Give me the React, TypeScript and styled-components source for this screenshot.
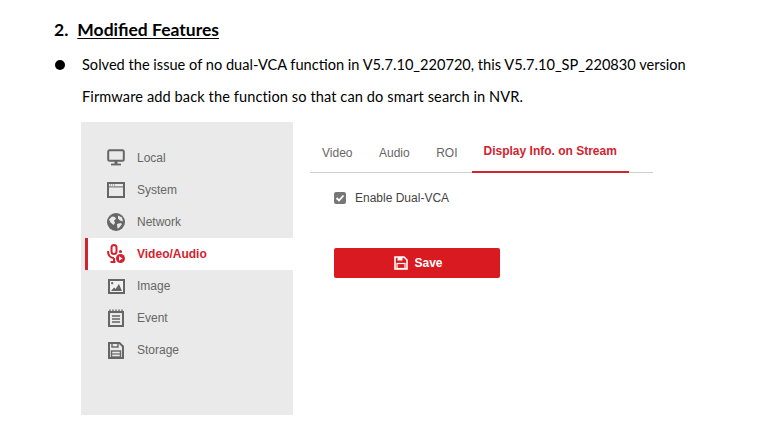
import styled, { createGlobalStyle } from "styled-components";
import type { ReactNode } from "react";

const GlobalStyle = createGlobalStyle`
  html, body {
    margin: 0;
    padding: 0;
    background: #fff;
  }
`;

const grey = "#666";
const red = "#d2232f";

const icons: Record<string, ReactNode> = {
  Local: (
    <svg width="18" height="18" viewBox="0 0 18 18">
      <rect x="1.2" y="1.2" width="15.6" height="10.6" rx="1.5" fill="none" stroke={grey} strokeWidth="2" />
      <rect x="7.5" y="12" width="3" height="3" fill={grey} />
      <rect x="4" y="14.6" width="10" height="1.8" fill={grey} />
    </svg>
  ),
  System: (
    <svg width="18" height="16" viewBox="0 0 18 16">
      <rect x="1" y="1" width="16" height="14" fill="none" stroke={grey} strokeWidth="2" />
      <rect x="1" y="4.4" width="16" height="1" fill={grey} />
      <path d="M3 3h1M5 3h1M7 3h1" stroke={grey} strokeWidth="0.8" />
    </svg>
  ),
  Network: (
    <svg width="18" height="18" viewBox="0 0 18 18">
      <circle cx="9" cy="9" r="9" fill={grey} />
      <path d="M2 6.5l3-3 3 .5 1 2-2 1.5 1 2.5-1.5 2L3.5 9.500zM11 2.500l4 2 1 4-3-1-2-2zM10 11l3.500-1 1.500 1-3 4-1.500 .5z" fill="#eaeaea" />
    </svg>
  ),
  "Video/Audio": (
    <svg width="19" height="20" viewBox="0 0 19 20">
      <rect x="4.5" y="1" width="5" height="9" rx="2.500" fill="none" stroke={red} strokeWidth="2" />
      <path d="M1 7c0 5 3 7 6 7M7 14v3M3.500 18h5" fill="none" stroke={red} strokeWidth="2" />
      <circle cx="13.500" cy="14.500" r="4.500" fill={red} />
      <path d="M12 12.300l3.600 2.200-3.600 2.200z" fill="#fff" />
      <circle cx="13.500" cy="7.500" r="1.600" fill={red} />
    </svg>
  ),
  Image: (
    <svg width="17" height="15" viewBox="0 0 17 15">
      <rect x="1" y="1" width="15" height="13" fill="#f2f2f2" stroke={grey} strokeWidth="2" />
      <path d="M3 12l3-3.500 1.500 1.500 3.500-5 3 7z" fill={grey} />
      <rect x="3.200" y="3.200" width="2" height="2" fill={grey} />
    </svg>
  ),
  Event: (
    <svg width="16" height="18" viewBox="0 0 16 18">
      <rect x="1" y="3" width="14" height="14" fill="none" stroke={grey} strokeWidth="2" />
      <path d="M2 0.500v3M5 0.500v3M8 0.500v3M11 0.500v3M14 0.500v3" stroke={grey} strokeWidth="1.400" />
      <path d="M4 7h8M4 10h8M4 13h8" stroke={grey} strokeWidth="1.300" />
    </svg>
  ),
  Storage: (
    <svg width="16" height="17" viewBox="0 0 16 17">
      <path d="M1 1h10.500L15 4.500V16H1z" fill="none" stroke={grey} strokeWidth="2" />
      <rect x="4" y="1" width="6" height="4" fill="none" stroke={grey} strokeWidth="1.400" />
      <rect x="3.500" y="9" width="9" height="6" fill="none" stroke={grey} strokeWidth="1.400" />
      <path d="M3.500 12h9" stroke={grey} strokeWidth="1.200" />
    </svg>
  ),
};

const menu = ["Local", "System", "Network", "Video/Audio", "Image", "Event", "Storage"];
const tabs = ["Video", "Audio", "ROI"];

export default function App() {
  return (
    <>
      <GlobalStyle />
      <Page>
        <Heading>
          <HeadingNumber>2.</HeadingNumber>
          <HeadingTitle>Modified Features</HeadingTitle>
        </Heading>
        <Bullet>
          <Dot />
          <Lines>
            <Line>Solved the issue of no dual-VCA function in V5.7.10_220720, this V5.7.10_SP_220830 version</Line>
            <Line $wide>Firmware add back the function so that can do smart search in NVR.</Line>
          </Lines>
        </Bullet>
        <Shot>
          <Sidebar>
            {menu.map((name) => (
              <MenuRow key={name} $active={name === "Video/Audio"}>
                <MenuIcon>{icons[name]}</MenuIcon>
                {name}
              </MenuRow>
            ))}
          </Sidebar>
          <Main>
            <TabBar>
              {tabs.map((t) => (
                <Tab key={t}>{t}</Tab>
              ))}
              <ActiveTab>Display Info. on Stream</ActiveTab>
            </TabBar>
            <CheckRow>
              <CheckBox>
                <svg width="10" height="10" viewBox="0 0 10 10">
                  <path d="M1.500 5l2.500 2.500 4.500-5" fill="none" stroke="#fff" strokeWidth="1.800" />
                </svg>
              </CheckBox>
              Enable Dual-VCA
            </CheckRow>
            <SaveButton>
              <svg width="14" height="14" viewBox="0 0 14 14">
                <path d="M1 1h9l3 3v9H1z" fill="none" stroke="#fff" strokeWidth="1.600" />
                <rect x="3.500" y="1" width="5" height="3.500" fill="#fff" />
                <rect x="3" y="7.500" width="8" height="5" fill="none" stroke="#fff" strokeWidth="1.200" />
              </svg>
              Save
            </SaveButton>
          </Main>
        </Shot>
      </Page>
    </>
  );
}

const Page = styled.div`
  width: 760px;
  height: 430px;
  overflow: hidden;
  padding: 20px 0 0 54px;
  box-sizing: border-box;
  font-family: "Lato", "Liberation Sans", sans-serif;
  color: #000;
`;

const Heading = styled.div`
  display: flex;
  gap: 9px;
  height: 20px;
  font-size: 17.5px;
  line-height: 20px;
  font-weight: 700;
`;

const HeadingNumber = styled.span``;

const HeadingTitle = styled.span`
  text-decoration: underline;
  text-underline-offset: 2px;
`;

const Bullet = styled.div`
  display: flex;
  margin-top: 15px;
`;

const Dot = styled.span`
  width: 10px;
  height: 10px;
  margin: 5px 17px 0 1px;
  border-radius: 50%;
  background: #000;
`;

const Lines = styled.div`
  display: flex;
  flex-direction: column;
  gap: 12px;
`;

const Line = styled.div<{ $wide?: boolean }>`
  font-size: 14.6px;
  line-height: 20px;
  white-space: nowrap;
  letter-spacing: ${(p) => (p.$wide ? "0.09px" : "normal")};
`;

const Shot = styled.div`
  display: flex;
  margin: 15px 0 0 27px;
  font-family: "Liberation Sans", Arial, sans-serif;
  font-size: 12px;
`;

const Sidebar = styled.div`
  width: 212px;
  height: 293px;
  padding: 20px 0 0 4px;
  box-sizing: border-box;
  background: #eaeaea;
`;

const MenuRow = styled.div<{ $active?: boolean }>`
  display: flex;
  align-items: center;
  height: 32px;
  color: ${(p) => (p.$active ? red : "#666")};
  font-weight: ${(p) => (p.$active ? 700 : 400)};
  background: ${(p) => (p.$active ? "#fff" : "transparent")};
  box-shadow: ${(p) => (p.$active ? `inset 3px 0 0 ${red}` : "none")};
`;

const MenuIcon = styled.span`
  display: flex;
  align-items: center;
  justify-content: center;
  width: 20px;
  margin: 0 11px 0 21px;
`;

const Main = styled.div`
  width: 343px;
  margin-left: 17px;
`;

const TabBar = styled.div`
  display: flex;
  height: 50px;
  align-items: flex-end;
  border-bottom: 1px solid #d0d0d0;
  padding-left: 12px;
`;

const Tab = styled.div`
  height: 26px;
  margin-right: 26.5px;
  color: #666;
`;

const ActiveTab = styled.div`
  height: 27px;
  margin: 0 0 -1px -12.5px;
  padding: 0 12px;
  color: ${red};
  font-weight: 700;
  border-bottom: 2px solid ${red};
`;

const CheckRow = styled.div`
  display: flex;
  align-items: center;
  gap: 9px;
  margin: 17px 0 0 24px;
  height: 16px;
  color: #444;
`;

const CheckBox = styled.span`
  display: flex;
  align-items: center;
  justify-content: center;
  width: 12px;
  height: 12px;
  border-radius: 2px;
  background: #777;
`;

const SaveButton = styled.div`
  display: flex;
  align-items: center;
  justify-content: center;
  gap: 6px;
  width: 166px;
  height: 30px;
  margin: 42px 0 0 24px;
  padding-left: 3px;
  box-sizing: border-box;
  border-radius: 2px;
  background: #da1a21;
  color: #fff;
  font-weight: 700;
`;
